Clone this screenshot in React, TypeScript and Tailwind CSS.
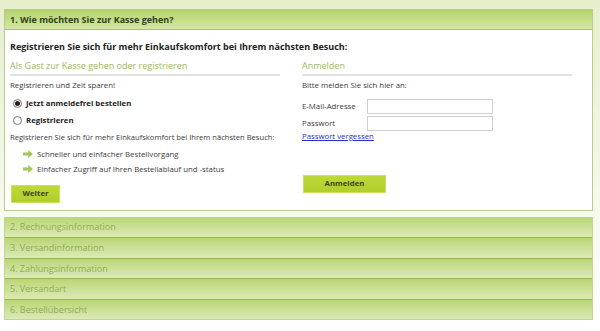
import React from "react";

const steps = [
  "2. Rechnungsinformation",
  "3. Versandinformation",
  "4. Zahlungsinformation",
  "5. Versandart",
  "6. Bestellübersicht",
];

function Radio({ checked }: { checked?: boolean }) {
  return (
    <span className="flex h-[9px] w-[9px] items-center justify-center rounded-full border border-[#777] bg-white">
      {checked && <span className="h-[5px] w-[5px] rounded-full bg-[#222]" />}
    </span>
  );
}

function Arrow() {
  return (
    <svg width="10" height="8" viewBox="0 0 10 8" className="shrink-0">
      <path d="M0 2.6h5.2V0L10 4 5.2 8V5.4H0z" fill="#a5c65a" />
    </svg>
  );
}

export default function App() {
  return (
    <div
      className="h-[331px] w-[600px] bg-gradient-to-b from-[#e6efcc] via-[#f3f7e6] to-white pl-[4px] pt-[9px] text-[#3b3b3b]"
      style={{ fontFamily: '"Open Sans", "DejaVu Sans", sans-serif' }}
    >
      <div className="w-[589px] border border-[#b9cc8a]">
        <div className="flex h-[20px] items-center border-b border-[#a9c46a] bg-gradient-to-b from-[#b4d46a] to-[#d3e7a2] px-[5px] text-[9px] font-bold text-[#34411a]">
          1. Wie möchten Sie zur Kasse gehen?
        </div>
        <div className="h-[180px] bg-white px-[5px] pt-[10px]">
          <div className="text-[9px] font-bold leading-[14px] text-[#222]">
            Registrieren Sie sich für mehr Einkaufskomfort bei Ihrem nächsten Besuch:
          </div>
          <div className="mt-[5px] flex gap-[22px]">
            <div className="w-[270px]">
              <div className="border-b-2 border-[#e2e2e2] pb-[1px] text-[9px] leading-[14px] text-[#9ab860]">
                Als Gast zur Kasse gehen oder registrieren
              </div>
              <div className="mt-[3px] text-[7.8px] leading-[12px]">Registrieren und Zeit sparen!</div>
              <div className="mt-[6px] flex items-center gap-[4px] pl-[3px] text-[7.8px] font-bold leading-[12px] text-[#222]">
                <Radio checked />
                Jetzt anmeldefrei bestellen
              </div>
              <div className="mt-[5px] flex items-center gap-[4px] pl-[3px] text-[7.8px] font-bold leading-[12px] text-[#222]">
                <Radio />
                Registrieren
              </div>
              <div className="mt-[5px] whitespace-nowrap text-[7.6px] leading-[12px]">
                Registrieren Sie sich für mehr Einkaufskomfort bei Ihrem nächsten Besuch:
              </div>
              <div className="mt-[5px] flex flex-col gap-[3px] pl-[13px] text-[7.8px] leading-[12px]">
                <div className="flex items-center gap-[4px]">
                  <Arrow />
                  Schneller und einfacher Bestellvorgang
                </div>
                <div className="flex items-center gap-[4px]">
                  <Arrow />
                  Einfacher Zugriff auf Ihren Bestellablauf und -status
                </div>
              </div>
              <button className="ml-[1px] mt-[10px] flex h-[18px] w-[49px] items-center justify-center border border-[#c9e25e] bg-gradient-to-b from-[#bcd83a] to-[#b0cf2a] text-[7.8px] font-bold text-[#3a4620]">
                Weiter
              </button>
            </div>
            <div className="w-[270px]">
              <div className="border-b-2 border-[#e2e2e2] pb-[1px] text-[9px] leading-[14px] text-[#9ab860]">
                Anmelden
              </div>
              <div className="mt-[3px] text-[7.8px] leading-[12px]">Bitte melden Sie sich hier an:</div>
              <div className="mt-[8px] flex items-center">
                <span className="w-[65px] text-[7.8px]">E-Mail-Adresse</span>
                <input className="h-[15px] w-[126px] border border-[#d0d0d0] bg-white" />
              </div>
              <div className="mt-[2px] flex items-center">
                <span className="w-[65px] text-[7.8px]">Passwort</span>
                <input type="password" className="h-[15px] w-[126px] border border-[#d0d0d0] bg-white" />
              </div>
              <a href="#" className="block text-[7.8px] leading-[11px] text-[#2430c8] underline">
                Passwort vergessen
              </a>
              <button className="ml-[1px] mt-[33px] flex h-[18px] w-[83px] items-center justify-center border border-[#c9e25e] bg-gradient-to-b from-[#bcd83a] to-[#b0cf2a] text-[7.8px] font-bold text-[#3a4620]">
                Anmelden
              </button>
            </div>
          </div>
        </div>
      </div>
      <div className="mt-[6px] w-[589px] border-x border-b border-[#c3d596]">
        {steps.map((s) => (
          <div
            key={s}
            className="flex h-[20.4px] items-center border-t border-[#93b44e] bg-gradient-to-b from-[#bad674] to-[#dceab6] px-[5px] text-[9px] text-[#8fae52] first:border-t-0"
          >
            {s}
          </div>
        ))}
      </div>
    </div>
  );
}
